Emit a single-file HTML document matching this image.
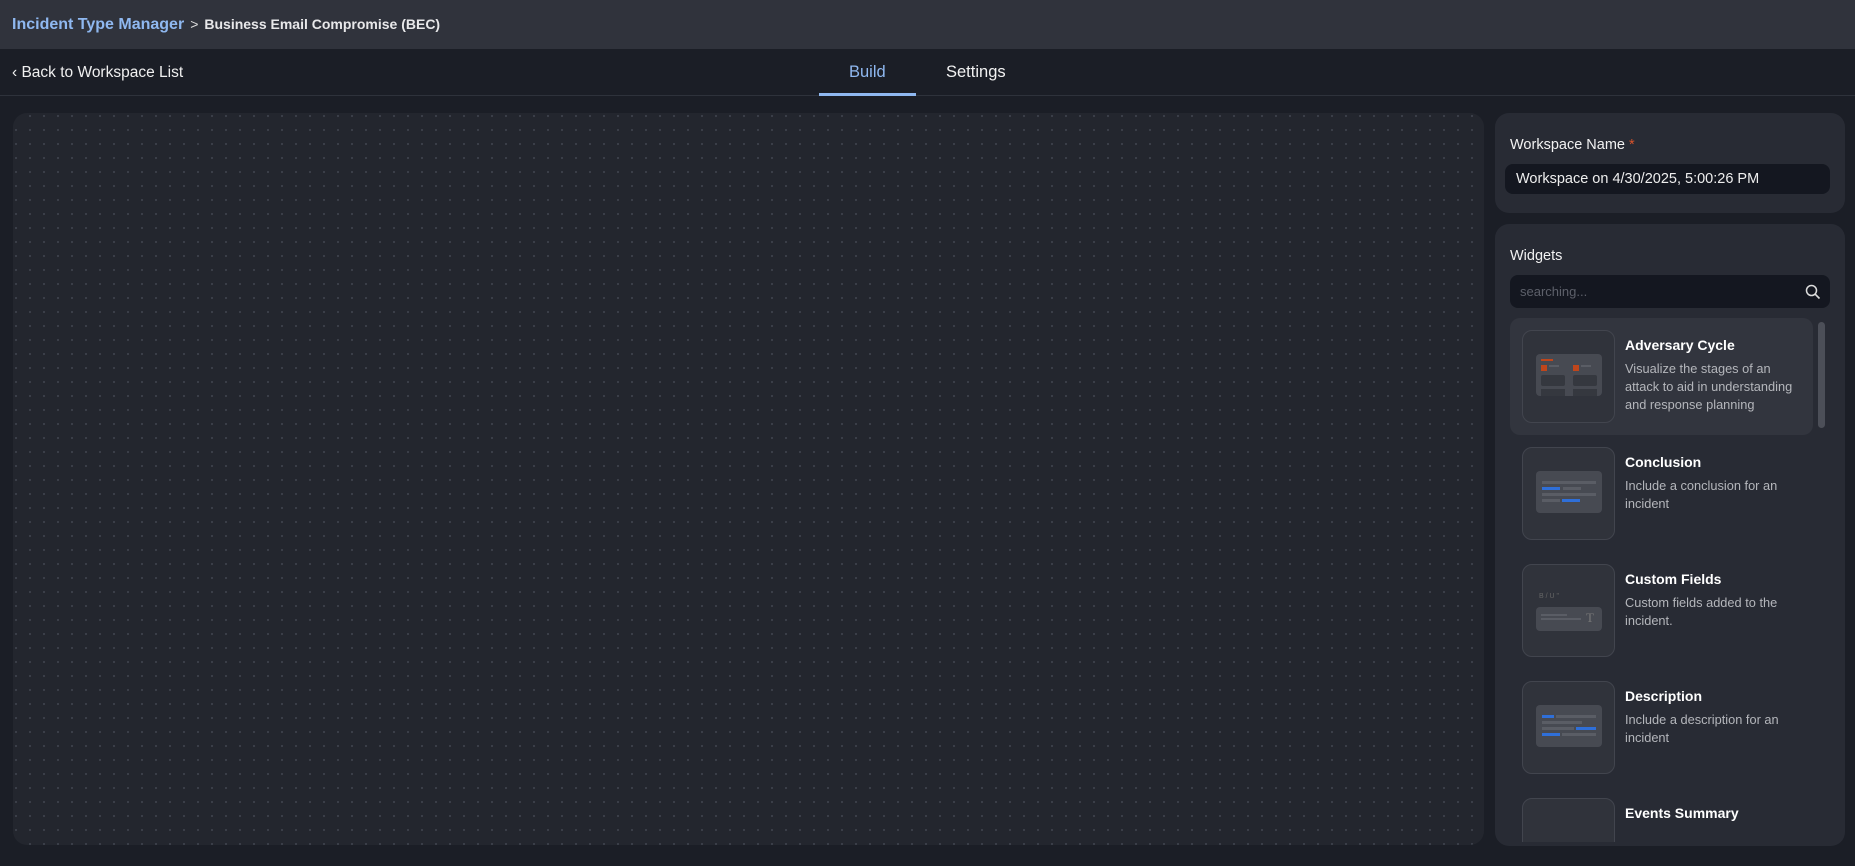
<!DOCTYPE html>
<html><head><meta charset="utf-8"><style>
*{box-sizing:border-box;margin:0;padding:0}
body{width:1855px;height:866px;background:#1b1e26;font-family:"Liberation Sans",sans-serif;color:#fff;position:relative;overflow:hidden}
.hdr{position:absolute;left:0;top:0;width:1855px;height:49px;background:#30333c;}
.bc{position:absolute;left:12px;top:16px;display:flex;align-items:baseline;white-space:nowrap}
.bc1{font-size:16px;font-weight:bold;color:#8fb8f0}
.bc2{font-size:14px;font-weight:bold;color:#e8e8ea}
.nav{position:absolute;left:0;top:49px;width:1855px;height:47px;border-bottom:1px solid #2e323b}
.back{position:absolute;left:12px;top:64px;font-size:15.5px;color:#f0f0f0}
.tab{position:absolute;top:63px;font-size:16.5px}
.ul{position:absolute;left:819px;top:93px;width:97px;height:3px;background:#8fb8f0}
.canvas{position:absolute;left:13px;top:113px;width:1471px;height:732px;border-radius:14px;background-color:#23262e;
background-image:radial-gradient(circle at 1px 1px,#3b3f49 1px,transparent 1.3px);background-size:14px 14px;background-position:16px 16px}
.p{position:absolute;background:#282b34;border-radius:14px}
.lbl{position:absolute;font-size:14.5px;color:#f2f2f2}
.inp{position:absolute;background:#141720;border-radius:8px}
.item{position:absolute;left:1510px;width:303px;height:117px;border-radius:10px}
.th{position:absolute;left:12px;top:12px;width:93px;height:93px;border:1px solid #42454e;border-radius:10px;background:#30333b}
.mini{position:absolute;left:13px;top:23px;width:66px;height:42px;background:#474a52;border-radius:4px}
.t{position:absolute;left:115px;top:19px;font-size:14px;font-weight:bold;color:#fff}
.d{position:absolute;left:115px;top:42px;width:180px;font-size:12.8px;line-height:18px;color:#b4b6bb}
.bar{position:absolute;height:3px;background:#5a5d65}
.bl{background:#2f6fd8}
</style></head><body>
<div class="hdr"></div>
<div class="bc"><span class="bc1">Incident Type Manager</span><span style="font-size:14px;color:#ddd;margin:0 6px">&gt;</span><span class="bc2">Business Email Compromise (BEC)</span></div>
<div class="nav"></div>
<div class="back">‹ Back to Workspace List</div>
<div class="tab" style="left:849px;color:#8fb8f0">Build</div>
<div class="tab" style="left:946px;color:#f2f2f2">Settings</div>
<div class="ul"></div>
<div class="canvas"></div>

<div class="p" style="left:1495px;top:113px;width:350px;height:100px"></div>
<div class="lbl" style="left:1510px;top:137px">Workspace Name <span style="color:#d9532b">*</span></div>
<div class="inp" style="left:1505px;top:164px;width:325px;height:30px"></div>
<div style="position:absolute;left:1516px;top:171px;font-size:14.5px;color:#eee">Workspace on 4/30/2025, 5:00:26 PM</div>

<div class="p" style="left:1495px;top:224px;width:350px;height:622px;overflow:hidden"></div>
<div class="lbl" style="left:1510px;top:248px">Widgets</div>
<div class="inp" style="left:1510px;top:275px;width:320px;height:33px;border-radius:8px"></div>
<div style="position:absolute;left:1520px;top:284px;font-size:13px;color:#5d606a">searching...</div>
<svg style="position:absolute;left:1805px;top:284px" width="16" height="16" viewBox="0 0 16 16"><circle cx="6.5" cy="6.5" r="5" fill="none" stroke="#ddd" stroke-width="1.5"/><path d="M10.2 10.2L14.5 14.5" stroke="#ddd" stroke-width="1.6"/></svg>
<div style="position:absolute;left:1818px;top:322px;width:7px;height:106px;border-radius:4px;background:#4c4f58"></div>

<div style="position:absolute;left:1495px;top:318px;width:350px;height:524px;overflow:hidden">
<div class="item" style="left:15px;top:0;background:#32353e">
 <div class="th"><div class="mini">
  <div style="position:absolute;left:5px;top:5px;width:12px;height:2px;background:#c0461b"></div>
  <div style="position:absolute;left:5px;top:11px;width:6px;height:6px;background:#c0461b"></div>
  <div class="bar" style="left:13px;top:11px;width:10px;height:2px"></div>
  <div style="position:absolute;left:37px;top:11px;width:6px;height:6px;background:#c0461b"></div>
  <div class="bar" style="left:45px;top:11px;width:10px;height:2px"></div>
  <div style="position:absolute;left:5px;top:21px;width:24px;height:11px;background:#35383f;border-radius:2px"></div>
  <div style="position:absolute;left:37px;top:21px;width:24px;height:11px;background:#35383f;border-radius:2px"></div>
  <div style="position:absolute;left:5px;top:35px;width:24px;height:7px;background:#35383f"></div>
  <div style="position:absolute;left:37px;top:35px;width:24px;height:7px;background:#35383f"></div>
 </div></div>
 <div class="t">Adversary Cycle</div>
 <div class="d">Visualize the stages of an attack to aid in understanding and response planning</div>
</div>
<div class="item" style="left:15px;top:117px">
 <div class="th"><div class="mini">
  <div class="bar" style="left:6px;top:10px;width:54px"></div><div class="bar bl" style="left:6px;top:16px;width:18px"></div><div class="bar" style="left:27px;top:16px;width:18px"></div>
  <div class="bar" style="left:6px;top:22px;width:54px"></div><div class="bar" style="left:6px;top:28px;width:18px"></div><div class="bar bl" style="left:26px;top:28px;width:18px"></div></div></div>
 <div class="t">Conclusion</div>
 <div class="d">Include a conclusion for an incident</div>
</div>
<div class="item" style="left:15px;top:234px">
 <div class="th"><div style="position:absolute;left:16px;top:28px;font-size:7px;color:#666">B / U "</div>
 <div class="mini" style="top:42px;height:24px"><div class="bar" style="left:5px;top:7px;width:26px;height:2px"></div><div class="bar" style="left:5px;top:11px;width:40px;height:2px"></div><div style="position:absolute;left:50px;top:3px;font-size:13px;color:#777;font-family:'Liberation Serif',serif">T</div></div></div>
 <div class="t">Custom Fields</div>
 <div class="d">Custom fields added to the incident.</div>
</div>
<div class="item" style="left:15px;top:351px">
 <div class="th"><div class="mini">
  <div class="bar bl" style="left:6px;top:10px;width:12px"></div><div class="bar" style="left:20px;top:10px;width:40px"></div>
  <div class="bar" style="left:6px;top:16px;width:40px"></div><div class="bar bl" style="left:40px;top:22px;width:20px"></div>
  <div class="bar" style="left:6px;top:22px;width:32px"></div><div class="bar bl" style="left:6px;top:28px;width:18px"></div><div class="bar" style="left:26px;top:28px;width:34px"></div></div></div>
 <div class="t">Description</div>
 <div class="d">Include a description for an incident</div>
</div>
<div class="item" style="left:15px;top:468px">
 <div class="th"></div>
 <div class="t">Events Summary</div>
</div>
</div>
</body></html>
